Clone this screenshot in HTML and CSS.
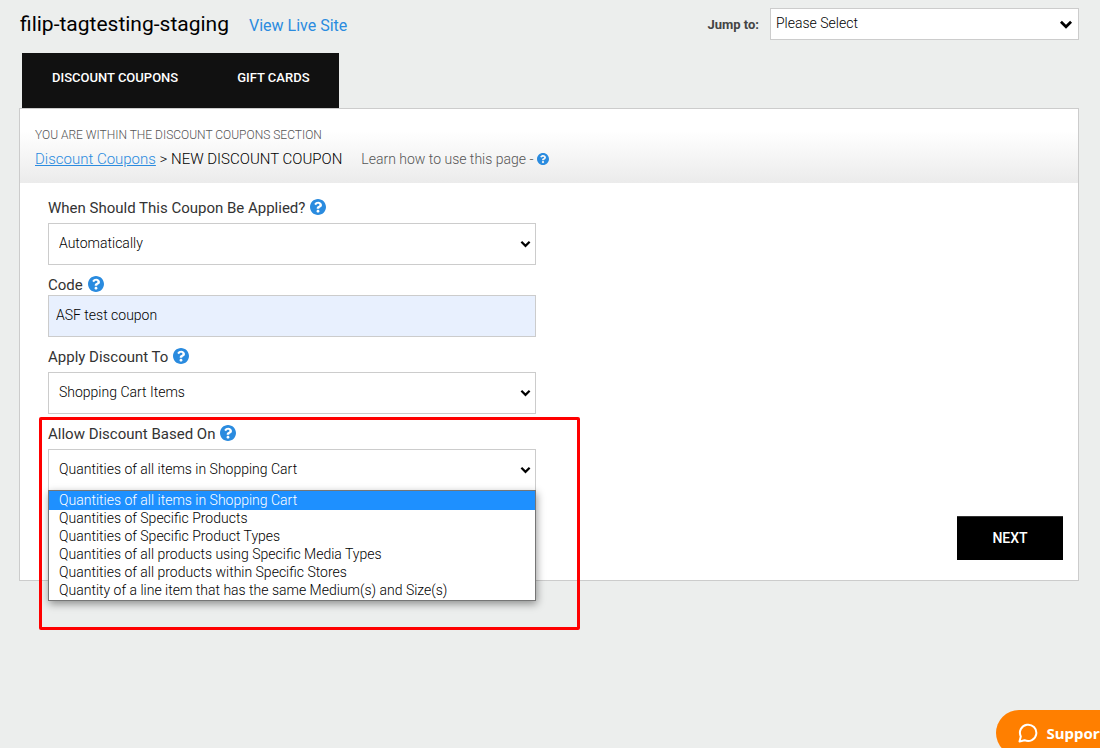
FILE: index.html
```html
<!DOCTYPE html>
<html lang="en">
<head>
    <meta charset="UTF-8">
    <meta name="viewport" content="width=device-width, initial-scale=1.0">
    <title>New Discount Coupon</title>
    <link rel="stylesheet" href="styles.css">
</head>
<body>
    <!-- shared icons -->
    <svg class="icon-defs" aria-hidden="true">
        <symbol id="help" viewBox="8 8 496 496">
            <path d="M504 256c0 136.997-111.043 248-248 248S8 392.997 8 256C8 119.083 119.043 8 256 8s248 111.083 248 248zM262.655 90c-54.497 0-89.255 22.957-116.549 63.758-3.536 5.286-2.353 12.415 2.715 16.258l34.699 26.31c5.205 3.947 12.621 3.008 16.665-2.122 17.864-22.658 30.113-35.797 57.303-35.797 20.429 0 45.698 13.148 45.698 32.958 0 14.976-12.363 22.667-32.534 33.976C247.128 238.528 216 254.941 216 296v4c0 6.627 5.373 12 12 12h56c6.627 0 12-5.373 12-12v-1.333c0-28.462 83.186-29.647 83.186-106.667 0-58.002-60.165-102-116.531-102zM256 338c-25.365 0-46 20.635-46 46 0 25.364 20.635 46 46 46s46-20.636 46-46c0-25.364-20.635-46-46-46z"/>
        </symbol>
        <symbol id="arrow" viewBox="0 0 12 8">
            <path d="M1.500 1.500 6 6l4.500-4.500" fill="none" stroke="currentColor" stroke-width="2.400"/>
        </symbol>
    </svg>

    <header class="top-bar">
        <h1 class="site-name">filip-tagtesting-staging</h1>
        <a class="live-link" href="#">View Live Site</a>
        <div class="jump">
            <label class="jump-label" for="jumpTo">Jump to:</label>
            <div class="select-wrap jump-select">
                <select id="jumpTo">
                    <option>Please Select</option>
                </select>
                <svg class="arrow"><use href="#arrow"/></svg>
            </div>
        </div>
    </header>

    <main class="container">
        <nav class="tabs">
            <a href="#">DISCOUNT COUPONS</a>
            <a href="#">GIFT CARDS</a>
        </nav>

        <div class="panel">
            <div class="panel-header">
                <p class="section-note">YOU ARE WITHIN THE DISCOUNT COUPONS SECTION</p>
                <div class="breadcrumb">
                    <p><a class="crumb-link" href="#">Discount Coupons</a> &gt; NEW DISCOUNT COUPON</p>
                    <a class="learn" href="#">Learn how to use this page - <svg class="help-small"><use href="#help"/></svg></a>
                </div>
            </div>

            <form class="coupon-form">
                <div class="field">
                    <div class="field-label">
                        <label for="applied">When Should This Coupon Be Applied?</label>
                        <svg class="help"><use href="#help"/></svg>
                    </div>
                    <div class="select-wrap">
                        <select id="applied">
                            <option>Automatically</option>
                        </select>
                        <svg class="arrow"><use href="#arrow"/></svg>
                    </div>
                </div>

                <div class="field">
                    <div class="field-label">
                        <label for="code">Code</label>
                        <svg class="help"><use href="#help"/></svg>
                    </div>
                    <input class="code-input" type="text" id="code" value="ASF test coupon">
                </div>

                <div class="field">
                    <div class="field-label">
                        <label for="applyTo">Apply Discount To</label>
                        <svg class="help"><use href="#help"/></svg>
                    </div>
                    <div class="select-wrap">
                        <select id="applyTo">
                            <option>Shopping Cart Items</option>
                        </select>
                        <svg class="arrow"><use href="#arrow"/></svg>
                    </div>
                </div>

                <div class="field">
                    <div class="field-label">
                        <label for="basedOn">Allow Discount Based On</label>
                        <svg class="help"><use href="#help"/></svg>
                    </div>
                    <div class="select-wrap">
                        <select id="basedOn">
                            <option>Quantities of all items in Shopping Cart</option>
                            <option>Quantities of Specific Products</option>
                            <option>Quantities of Specific Product Types</option>
                            <option>Quantities of all products using Specific Media Types</option>
                            <option>Quantities of all products within Specific Stores</option>
                            <option>Quantity of a line item that has the same Medium(s) and Size(s)</option>
                        </select>
                        <svg class="arrow"><use href="#arrow"/></svg>
                        <ul class="option-list" role="listbox">
                            <li class="active" role="option" aria-selected="true">Quantities of all items in Shopping Cart</li>
                            <li role="option">Quantities of Specific Products</li>
                            <li role="option">Quantities of Specific Product Types</li>
                            <li role="option">Quantities of all products using Specific Media Types</li>
                            <li role="option">Quantities of all products within Specific Stores</li>
                            <li role="option">Quantity of a line item that has the same Medium(s) and Size(s)</li>
                        </ul>
                    </div>
                    <div class="highlight-box"></div>
                </div>

                <div class="form-footer">
                    <button class="next-btn" type="button">NEXT</button>
                </div>
            </form>
        </div>
    </main>

    <button class="support-btn" type="button">
        <svg class="chat-icon" viewBox="0 0 20 20">
            <path d="M2.800 13.500A8.200 8.200 0 1 1 6.500 17.200L1.500 18.600Z" fill="none" stroke="currentColor" stroke-width="2" stroke-linejoin="round"/>
        </svg>
        Support
    </button>
</body>
</html>
```

FILE: styles.css
```css
* {
    box-sizing: border-box;
}

body {
    margin: 0;
    min-height: 100vh;
    background-color: #eceeed;
    font-family: Roboto, sans-serif;
    font-size: 14px;
    font-weight: 300;
    color: #000;
}

h1, p, ul {
    margin: 0;
    padding: 0;
}

.icon-defs {
    display: none;
}

/* top bar */
.top-bar {
    display: flex;
    align-items: center;
    padding: 8px 21px 0 20px;
}

.site-name {
    font-size: 21px;
    font-weight: 400;
    line-height: 32px;
}

.live-link {
    margin-left: 20px;
    padding-top: 2px;
    font-size: 16px;
    font-weight: 400;
    color: #2a8bdf;
    text-decoration: none;
}

.jump {
    display: flex;
    align-items: center;
    gap: 11px;
    margin-left: auto;
}

.jump-label {
    font-size: 13px;
    font-weight: 700;
    color: #444;
}

/* select boxes */
.select-wrap {
    position: relative;
}

select {
    display: block;
    width: 100%;
    height: 42px;
    padding: 0 30px 2px 10px;
    appearance: none;
    border: 1px solid #ccc;
    border-radius: 0;
    background-color: #fff;
    font: inherit;
    color: #000;
}

.arrow {
    position: absolute;
    top: 17px;
    right: 5px;
    width: 11px;
    height: 8px;
    pointer-events: none;
}

.jump-select {
    width: 309px;
}

.jump-select select {
    height: 32px;
    padding-left: 5px;
}

.jump-select .arrow {
    top: 12px;
    right: 6px;
    width: 14px;
    height: 9px;
}

/* tabs */
.container {
    padding: 13px 21px 0 19px;
}

.tabs {
    display: flex;
    width: fit-content;
    margin-left: 3px;
    background-color: #111;
}

.tabs a {
    padding: 0 29px 6px 30px;
    font-size: 13px;
    font-weight: 500;
    line-height: 49px;
    color: #fff;
    text-decoration: none;
}

/* panel */
.panel {
    border: 1px solid #ccc;
    background-color: #fff;
}

.panel-header {
    padding: 16px 15px 14px;
    background: linear-gradient(#fff 30%, #ebebeb);
}

.section-note {
    font-size: 12px;
    line-height: 20px;
    color: #555;
}

.breadcrumb {
    display: flex;
    gap: 19px;
    padding-top: 4px;
    font-size: 15px;
    line-height: 20px;
}

.crumb-link {
    color: #2a8bdf;
}

.learn {
    display: flex;
    align-items: center;
    gap: 4px;
    font-size: 14px;
    color: #555;
    text-decoration: none;
}

.help,
.help-small {
    width: 16px;
    height: 16px;
    fill: #2a8bdf;
}

.help {
    margin-top: 1px;
}

.help-small {
    width: 12px;
    height: 12px;
}

/* form */
.coupon-form {
    padding: 5px 15px 20px 28px;
}

.field {
    position: relative;
    max-width: 488px;
    padding-top: 10px;
}

.field-label {
    display: flex;
    gap: 5px;
    font-size: 15px;
    font-weight: 400;
    line-height: 20px;
    color: #333;
}

.field .select-wrap {
    margin-top: 5px;
}

.code-input {
    display: block;
    width: 100%;
    height: 42px;
    padding: 0 7px 2px;
    border: 1px solid #ccc;
    background-color: #e8f0fe;
    font: inherit;
    color: #000;
}

.option-list {
    position: absolute;
    top: 41px;
    left: 0;
    z-index: 2;
    width: 100%;
    padding-bottom: 1px;
    border: 1px solid #767676;
    background-color: #fff;
    box-shadow: 1px 3px 8px rgba(0, 0, 0, 0.4);
    list-style: none;
}

.option-list li {
    padding-left: 10px;
    line-height: 18px;
}

.option-list .active {
    background-color: #1e90ff;
    box-shadow: 0 1px #1e90ff;
    color: #fff;
}

.highlight-box {
    position: absolute;
    top: 3px;
    left: -9px;
    right: -44px;
    z-index: 3;
    height: 213px;
    border: 3px solid #f00;
    border-radius: 2px;
    pointer-events: none;
}

.form-footer {
    display: flex;
    justify-content: flex-end;
    padding-top: 25px;
}

.next-btn {
    min-width: 106px;
    height: 44px;
    padding: 0 35px 2px;
    border: none;
    border-top: 1px solid #333;
    background-color: #000;
    font-family: inherit;
    font-size: 14px;
    font-weight: 500;
    color: #fff;
    cursor: pointer;
}

/* support widget */
.support-btn {
    position: fixed;
    right: -28px;
    bottom: -8px;
    display: flex;
    align-items: center;
    gap: 8px;
    height: 46px;
    padding: 0 22px;
    border: none;
    border-radius: 23px;
    background-color: #ff7f00;
    font-family: "Noto Sans", sans-serif;
    font-size: 15px;
    font-weight: 700;
    color: #fff;
    cursor: pointer;
}

.chat-icon {
    width: 20px;
    height: 20px;
}
```
